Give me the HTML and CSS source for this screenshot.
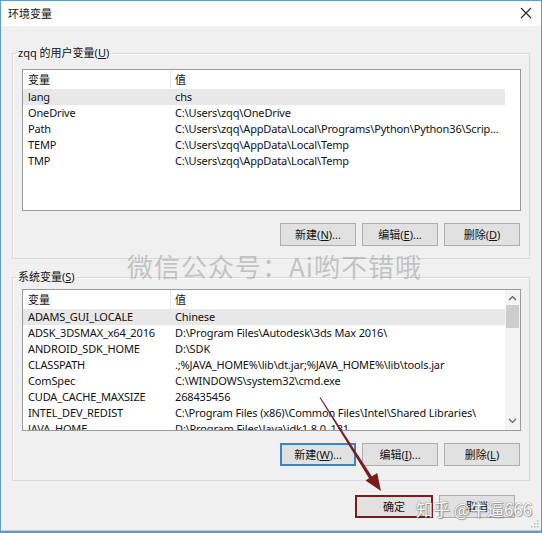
FILE: index.html
```html
<!DOCTYPE html>
<html lang="zh-CN">
<head>
<meta charset="utf-8">
<title>环境变量</title>
<link rel="stylesheet" href="styles.css">
</head>
<body>
<div class="window">
  <div class="titlebar">
    <span class="title">环境变量</span>
    <svg class="close" width="12" height="12" viewBox="0 0 12 12"><path d="M1 1L11 11M11 1L1 11" stroke="#222" stroke-width="1.1" fill="none"/></svg>
  </div>
  <div class="body">
    <fieldset class="group group-user">
      <legend>zqq 的用户变量(<u>U</u>)</legend>
      <div class="list list-user">
        <div class="rows">
          <div class="row head"><span class="c1">变量</span><span class="c2">值</span></div>
          <div class="row sel"><span class="c1">lang</span><span class="c2">chs</span></div>
          <div class="row"><span class="c1">OneDrive</span><span class="c2">C:\Users\zqq\OneDrive</span></div>
          <div class="row"><span class="c1">Path</span><span class="c2">C:\Users\zqq\AppData\Local\Programs\Python\Python36\Scrip...</span></div>
          <div class="row"><span class="c1">TEMP</span><span class="c2">C:\Users\zqq\AppData\Local\Temp</span></div>
          <div class="row"><span class="c1">TMP</span><span class="c2">C:\Users\zqq\AppData\Local\Temp</span></div>
        </div>
        <div class="spacer"></div>
      </div>
      <div class="buttons">
        <button class="btn">新建(<u>N</u>)...</button>
        <button class="btn">编辑(<u>E</u>)...</button>
        <button class="btn">删除(<u>D</u>)</button>
      </div>
    </fieldset>
    <fieldset class="group group-sys">
      <legend>系统变量(<u>S</u>)</legend>
      <div class="list list-sys">
        <div class="rows">
          <div class="row head"><span class="c1">变量</span><span class="c2">值</span></div>
          <div class="row sel"><span class="c1">ADAMS_GUI_LOCALE</span><span class="c2">Chinese</span></div>
          <div class="row"><span class="c1">ADSK_3DSMAX_x64_2016</span><span class="c2">D:\Program Files\Autodesk\3ds Max 2016\</span></div>
          <div class="row"><span class="c1">ANDROID_SDK_HOME</span><span class="c2">D:\SDK</span></div>
          <div class="row"><span class="c1">CLASSPATH</span><span class="c2">.;%JAVA_HOME%\lib\dt.jar;%JAVA_HOME%\lib\tools.jar</span></div>
          <div class="row"><span class="c1">ComSpec</span><span class="c2">C:\WINDOWS\system32\cmd.exe</span></div>
          <div class="row"><span class="c1">CUDA_CACHE_MAXSIZE</span><span class="c2">268435456</span></div>
          <div class="row"><span class="c1">INTEL_DEV_REDIST</span><span class="c2">C:\Program Files (x86)\Common Files\Intel\Shared Libraries\</span></div>
          <div class="row"><span class="c1">JAVA_HOME</span><span class="c2">D:\Program Files\Java\jdk1.8.0_131</span></div>
        </div>
        <div class="scrollbar">
          <svg class="arrow-up" width="9" height="6" viewBox="0 0 9 6"><path d="M1 5L4.5 1.5L8 5" stroke="#606060" stroke-width="1.2" fill="none"/></svg>
          <div class="thumb"></div>
          <div class="track"></div>
          <svg class="arrow-down" width="9" height="6" viewBox="0 0 9 6"><path d="M1 1L4.5 4.5L8 1" stroke="#606060" stroke-width="1.2" fill="none"/></svg>
        </div>
      </div>
      <div class="buttons">
        <button class="btn focus">新建(<u>W</u>)...</button>
        <button class="btn">编辑(<u>I</u>)...</button>
        <button class="btn">删除(<u>L</u>)</button>
      </div>
    </fieldset>
    <div class="footer">
      <button class="btn ok">确定</button>
      <button class="btn cancel">取消</button>
    </div>
  </div>

  <div class="wm-center">微信公众号：Ai哟不错哦</div>
  <div class="wm-zhihu">知乎 @牛逼666</div>

  <svg class="annot" width="542" height="533" viewBox="0 0 542 533">
    <polygon points="319.6,397.8 320.4,397.2 372.6,477.6 369.8,479.4" fill="#7a1c1c"/>
    <polygon points="381,491 365.5,480.5 377.2,473" fill="#7a1c1c"/>
  </svg>
  <svg class="grip" width="9" height="9" viewBox="0 0 9 9">
    <rect x="7" y="1" width="1.5" height="1.5" fill="#b8b8b8"/>
    <rect x="4" y="4" width="1.5" height="1.5" fill="#b8b8b8"/>
    <rect x="7" y="4" width="1.5" height="1.5" fill="#b8b8b8"/>
    <rect x="1" y="7" width="1.5" height="1.5" fill="#b8b8b8"/>
    <rect x="4" y="7" width="1.5" height="1.5" fill="#b8b8b8"/>
    <rect x="7" y="7" width="1.5" height="1.5" fill="#b8b8b8"/>
  </svg>
</div>
</body>
</html>
```
FILE: styles.css
```css
* { box-sizing: border-box; }
html, body { margin: 0; padding: 0; }
body {
  width: 542px;
  height: 533px;
  overflow: hidden;
  font-family: "Noto Sans", "Noto Sans CJK SC", sans-serif;
  font-size: 11px;
  color: #111;
  background: #6aa7cf;
}
.window {
  position: relative;
  width: 542px;
  height: 533px;
  border: 1px solid #5d9ccb;
  border-bottom-width: 2px;
  display: flex;
  flex-direction: column;
  background: #f0f0f0;
}
.titlebar {
  height: 25px;
  background: #fff;
  display: flex;
  align-items: center;
  justify-content: space-between;
  padding: 0 9px 0 7px;
  flex: none;
}
.title {
  font-family: "Noto Sans CJK SC", sans-serif;
  font-size: 11px;
  color: #111;
  margin-top: -2px;
}
.close { display: block; margin-top: -1px; }
.body {
  flex: 1;
  padding: 19px 11px 0 11px;
  background: #f0f0f0;
  border-bottom: 1px solid #c8c8c8;
}
.group {
  margin: 0;
  border: 1px solid #dadada;
  box-shadow: inset 1px 1px 0 #fbfbfb;
  min-width: 0;
}
.group legend {
  padding: 0 2px;
  margin-left: -6px;
  height: 16px;
  line-height: 16px;
  font-family: "Noto Sans", "Noto Sans CJK SC", sans-serif;
  font-size: 11px;
  color: #111;
}
.group-user {
  padding: 8px 8px 11px 9px;
  height: 214px;
}
.group-sys {
  margin-top: 10px;
  padding: 4px 8px 13px 9px;
  height: 212px;
}
.list {
  height: 142px;
  border: 1px solid #9a9a9a;
  background: #fff;
  display: flex;
  overflow: hidden;
}
.rows {
  flex: 1;
  min-width: 0;
  overflow: hidden;
}
.spacer { width: 15px; flex: none; }
.row {
  display: flex;
  height: 16px;
  line-height: 16px;
  white-space: nowrap;
  letter-spacing: -0.15px;
}
.row.head {
  height: 19px;
  line-height: 18px;
  letter-spacing: 0;
  font-family: "Noto Sans CJK SC", sans-serif;
}
.row.sel { background: #e8e8e8; }
.c1 {
  width: 148px;
  flex: none;
  padding-left: 5px;
  overflow: hidden;
}
.head .c1 { border-right: 1px solid #e8e8e8; }
.c2 {
  flex: 1;
  padding-left: 4px;
  overflow: hidden;
}
.scrollbar {
  width: 15px;
  flex: none;
  background: #f4f4f4;
  display: flex;
  flex-direction: column;
  align-items: center;
}
.arrow-up { margin-top: 5px; flex: none; }
.arrow-down { margin-bottom: 6px; flex: none; }
.thumb {
  margin-top: 4px;
  width: 13px;
  height: 23px;
  background: #cdcdcd;
  flex: none;
}
.track { flex: 1; }
.buttons {
  display: flex;
  justify-content: flex-end;
  gap: 6px;
  margin-top: 12px;
  padding-right: 1px;
}
.btn {
  width: 76px;
  height: 23px;
  margin: 0;
  padding: 0;
  background: #e1e1e1;
  border: 1px solid #adadad;
  font-family: "Noto Sans", "Noto Sans CJK SC", sans-serif;
  font-size: 11px;
  color: #111;
  line-height: 20px;
}
.btn.focus {
  border: 2px solid #3a85c6;
}
.footer {
  display: flex;
  justify-content: flex-end;
  gap: 6px;
  margin-top: 14px;
  padding-right: 15px;
}
.btn.ok {
  width: 78px;
  border: 2px solid #7a1c1c;
}
.wm-center {
  position: absolute;
  left: 126px;
  top: 246px;
  font-family: "Noto Sans CJK SC", sans-serif;
  font-size: 26px;
  letter-spacing: 1px;
  color: rgba(150, 150, 150, 0.5);
  white-space: nowrap;
}
.wm-zhihu {
  position: absolute;
  left: 415px;
  top: 495px;
  font-family: "Noto Sans CJK SC", sans-serif;
  font-size: 17px;
  color: #fff;
  white-space: nowrap;
  text-shadow: 0 0 1px #777, 0 0 1px #777, 1px 1px 1px rgba(0,0,0,0.35);
  opacity: 0.9;
}
.annot {
  position: absolute;
  left: -1px;
  top: -1px;
  pointer-events: none;
}
.grip {
  position: absolute;
  right: 2px;
  bottom: 3px;
}
```
